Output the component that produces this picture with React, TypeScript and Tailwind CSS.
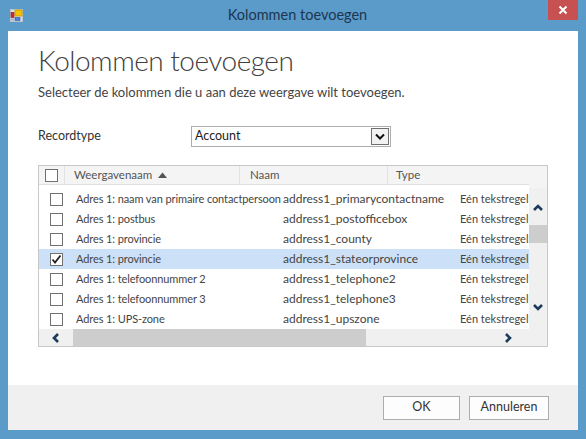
import React from "react";

const rows = [
  { a: "Adres 1: naam van primaire contactpersoon", b: "address1_primarycontactname", checked: false, sel: false },
  { a: "Adres 1: postbus", b: "address1_postofficebox", checked: false, sel: false },
  { a: "Adres 1: provincie", b: "address1_county", checked: false, sel: false },
  { a: "Adres 1: provincie", b: "address1_stateorprovince", checked: true, sel: true },
  { a: "Adres 1: telefoonnummer 2", b: "address1_telephone2", checked: false, sel: false },
  { a: "Adres 1: telefoonnummer 3", b: "address1_telephone3", checked: false, sel: false },
  { a: "Adres 1: UPS-zone", b: "address1_upszone", checked: false, sel: false },
];

function Box({ checked }: { checked?: boolean }) {
  return (
    <div className="w-[13px] h-[13px] border border-[#707070] bg-white flex items-center justify-center">
      {checked && (
        <svg width="11" height="11" viewBox="0 0 11 11">
          <path d="M1.5 5.5 L4 8.5 L9.5 1.5" fill="none" stroke="#222" strokeWidth="1.8" />
        </svg>
      )}
    </div>
  );
}

function Chevron({ dir }: { dir: "up" | "down" | "left" | "right" }) {
  const d = {
    up: "M2 8 L6 4 L10 8",
    down: "M2 4 L6 8 L10 4",
    left: "M8 2 L4 6 L8 10",
    right: "M4 2 L8 6 L4 10",
  }[dir];
  return (
    <svg width="12" height="12" viewBox="0 0 12 12">
      <path d={d} fill="none" stroke="#1b3a5c" strokeWidth="2.6" />
    </svg>
  );
}

export default function App() {
  return (
    <div
      className="w-[586px] h-[439px] bg-[#5b9bc9] flex flex-col overflow-hidden"
      style={{ fontFamily: 'Lato, "Open Sans", sans-serif' }}
    >
      {/* title bar */}
      <div className="h-[31px] flex items-start relative">
        <div className="pl-[10px] pt-[9px]">
          <svg width="13" height="13" viewBox="0 0 13 13">
            <rect x="0.5" y="0.5" width="12" height="12" fill="#d9dfe6" stroke="#b8c2cc" />
            <rect x="5" y="1" width="7" height="6" fill="#f5c400" stroke="#c99a00" strokeWidth="0.8" />
            <rect x="1" y="3.5" width="3" height="5" fill="#d42b2b" stroke="#9a1515" strokeWidth="0.6" />
            <rect x="5" y="8.5" width="5" height="3" fill="#4f7fd6" stroke="#2c56a8" strokeWidth="0.6" />
            <rect x="1" y="9.5" width="3" height="2" fill="#9fb3c8" />
          </svg>
        </div>
        <div className="flex-1 text-center pt-[5px] pl-[24px] text-[14.5px] leading-[20px] text-[#1c3650]">
          Kolommen toevoegen
        </div>
        <div className="w-[30px] h-[20px] bg-[#c75050] flex items-center justify-center mr-[8px]">
          <svg width="10" height="10" viewBox="0 0 10 10">
            <path d="M1.5 1.5 L8.5 8.5 M8.5 1.5 L1.5 8.5" stroke="#fff" strokeWidth="2" />
          </svg>
        </div>
      </div>

      {/* client */}
      <div className="mx-[8px] h-[399px] bg-white flex flex-col">
        <div className="flex-1 pl-[30px] pr-[29px]">
          <div className="mt-[13px] text-[28px] leading-[32px] font-light text-[#404040] tracking-[-0.5px]">
            Kolommen toevoegen
          </div>
          <div className="mt-[8px] text-[13px] leading-[16px] text-[#444]">
            Selecteer de kolommen die u aan deze weergave wilt toevoegen.
          </div>
          <div className="mt-[26px] flex items-center h-[21px]">
            <div className="w-[153px] text-[12.5px] text-[#333]">Recordtype</div>
            <div className="w-[200px] h-[21px] border border-[#abadb3] flex items-center justify-between pl-[3px] pr-[1px]">
              <span className="text-[12.5px] text-[#222]">Account</span>
              <div className="w-[18px] h-[17px] border border-[#707070] bg-[#f2f2f2] flex items-center justify-center">
                <svg width="10" height="8" viewBox="0 0 10 8">
                  <path d="M1 1.5 L5 5.5 L9 1.5" fill="none" stroke="#111" strokeWidth="2" />
                </svg>
              </div>
            </div>
          </div>

          {/* grid */}
          <div className="mt-[18px] w-[510px] h-[182px] border border-[#c8c8c8] flex flex-col">
            <div className="flex flex-1 min-h-0">
              <div className="flex-1 flex flex-col min-w-0">
                {/* header */}
                <div className="h-[22px] bg-[#f4f4f4] border-b border-[#e0e0e0] flex items-center text-[11.5px] text-[#555]">
                  <div className="w-[26px] h-full flex items-center pl-[6px] border-r border-[#e2e2e2]">
                    <Box />
                  </div>
                  <div className="w-[175px] h-full flex items-center pl-[9px] border-r border-[#e2e2e2]">
                    Weergavenaam
                    <svg width="9" height="6" viewBox="0 0 9 6" className="ml-[6px]">
                      <path d="M0 6 L4.5 0.5 L9 6 Z" fill="#555" />
                    </svg>
                  </div>
                  <div className="w-[148px] h-full flex items-center pl-[10px] border-r border-[#e2e2e2]">Naam</div>
                  <div className="flex-1 h-full flex items-center pl-[8px]">Type</div>
                </div>
                <div className="pt-[4px] flex flex-col">
                  {rows.map((r, i) => (
                    <div
                      key={i}
                      className={`h-[20px] flex items-center text-[#444] whitespace-nowrap overflow-hidden ${
                        r.sel ? "bg-[#cce1f7]" : ""
                      }`}
                    >
                      <div className="w-[37px] shrink-0 flex pl-[11px]">
                        <Box checked={r.checked} />
                      </div>
                      <div className="w-[207px] shrink-0 overflow-hidden text-[11px] tracking-[-0.1px]">{r.a}</div>
                      <div className="w-[177px] shrink-0 text-[12px]">{r.b}</div>
                      <div className="shrink-0 text-[11px]">Eén tekstregel</div>
                    </div>
                  ))}
                </div>
              </div>
              {/* vertical scrollbar */}
              <div className="w-[18px] flex flex-col bg-[#f0f0f0]">
                <div className="h-[22px] bg-[#f4f4f4]" />
                <div className="h-[37px] flex justify-center pt-[14px]">
                  <Chevron dir="up" />
                </div>
                <div className="h-[18px] bg-[#cdcdcd]" />
                <div className="flex-1" />
                <div className="h-[34px] flex justify-center pt-[6px]">
                  <Chevron dir="down" />
                </div>
              </div>
            </div>
            {/* horizontal scrollbar */}
            <div className="h-[17px] flex">
              <div className="flex-1 bg-[#f0f0f0] flex items-center">
                <div className="w-[34px] flex justify-center">
                  <Chevron dir="left" />
                </div>
                <div className="w-[293px] h-full bg-[#cdcdcd]" />
                <div className="flex-1 flex justify-end pr-[15px]">
                  <Chevron dir="right" />
                </div>
              </div>
              <div className="w-[18px] bg-[#f0f0f0]" />
            </div>
          </div>
        </div>

        {/* footer */}
        <div className="h-[45px] bg-[#f0f0f0] flex items-center justify-end gap-[9px] pr-[29px]">
          <button className="w-[77px] h-[24px] border border-[#adadad] bg-[#fdfdfd] text-[12.5px] text-[#333]">
            OK
          </button>
          <button className="w-[80px] h-[24px] border border-[#adadad] bg-[#fdfdfd] text-[12.5px] text-[#333]">
            Annuleren
          </button>
        </div>
      </div>
    </div>
  );
}
